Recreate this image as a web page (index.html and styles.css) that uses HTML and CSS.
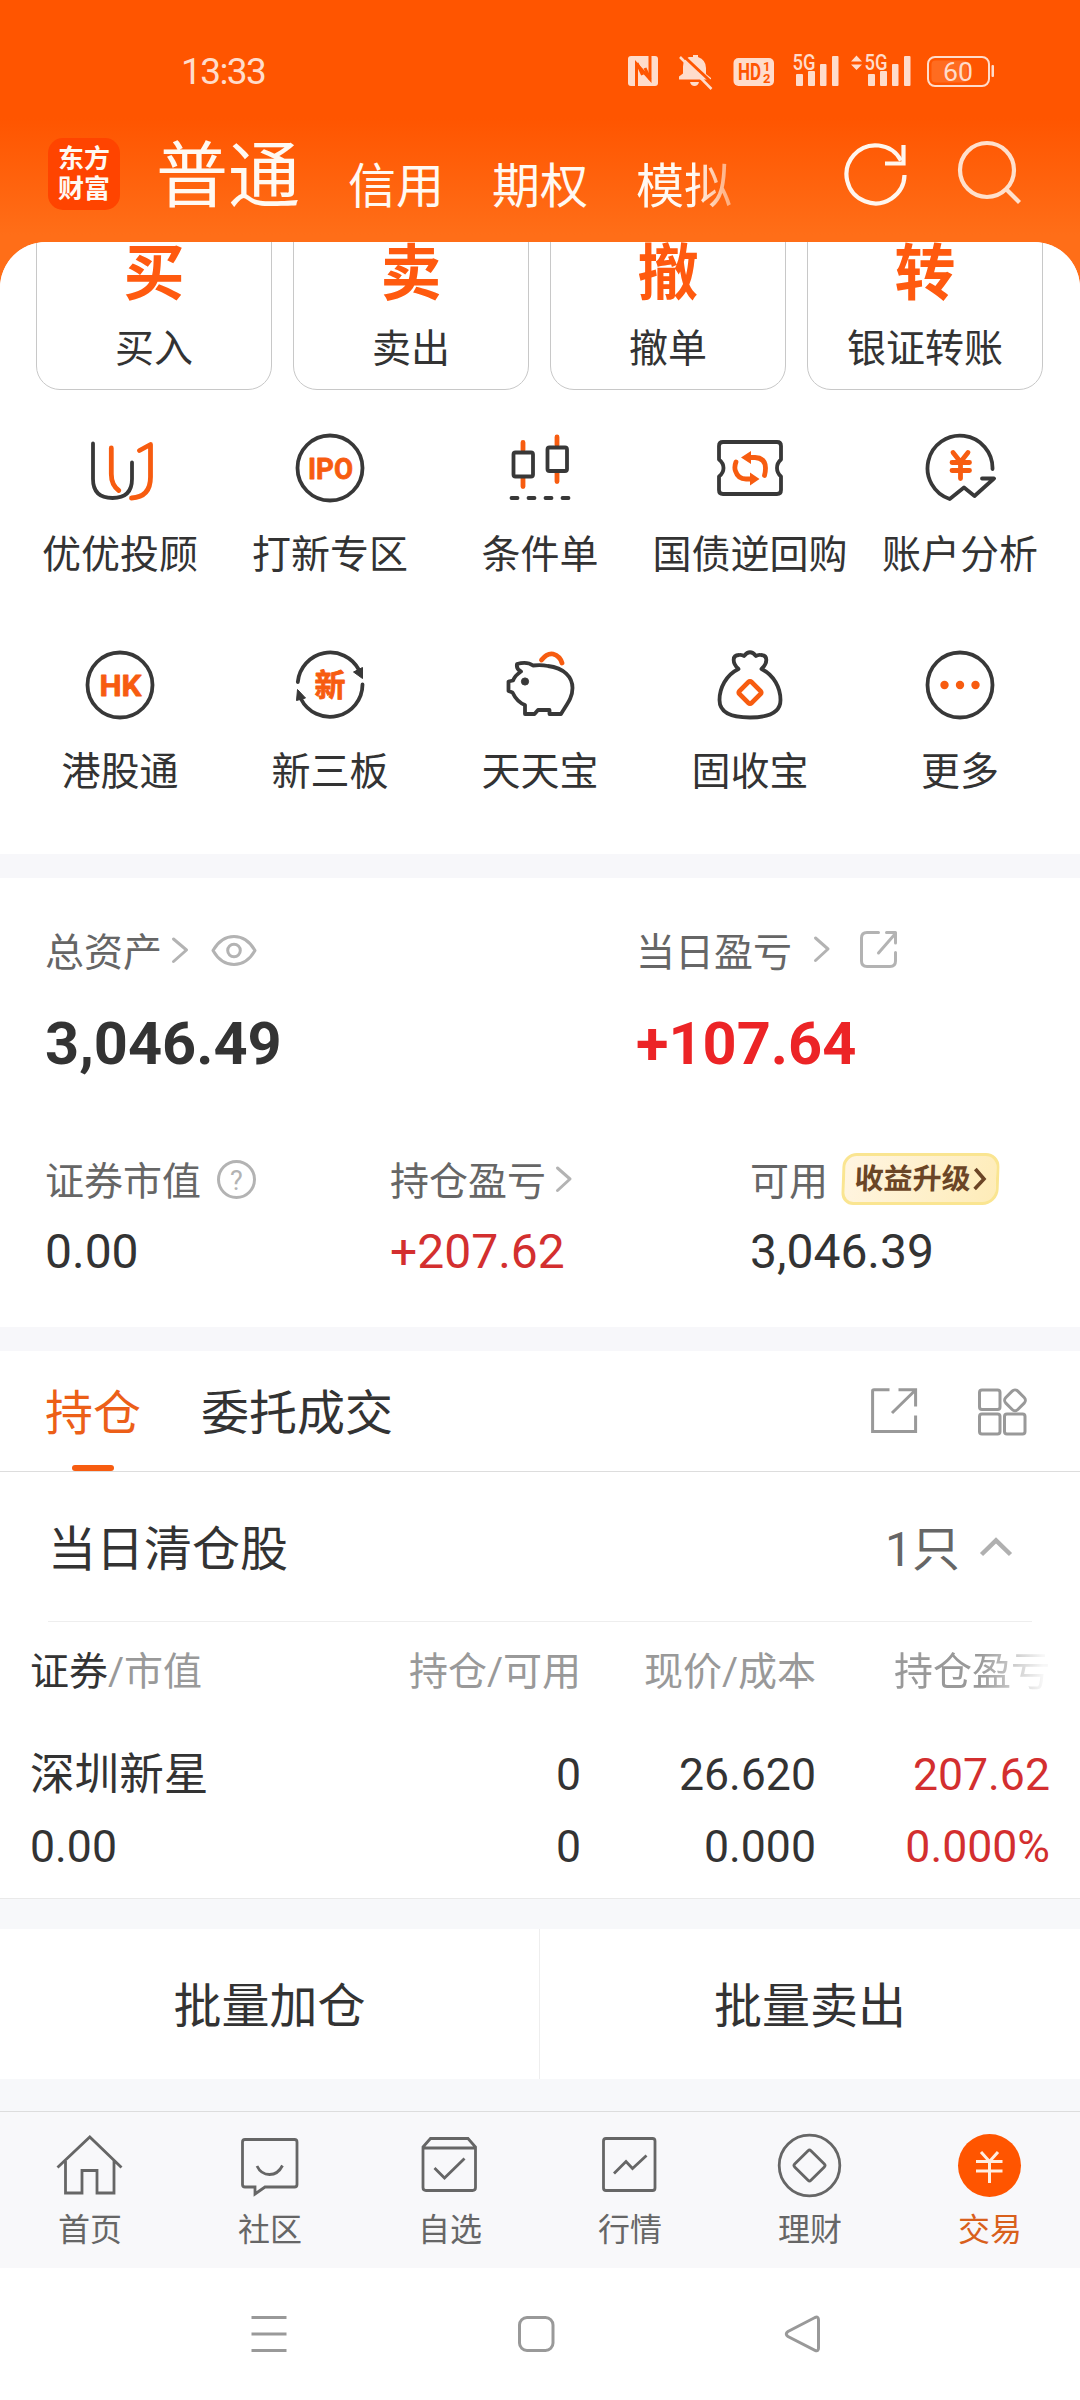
FILE: index.html
```html
<!DOCTYPE html>
<html lang="zh-CN">
<head>
<meta charset="utf-8">
<title>交易</title>
<link rel="stylesheet" href="styles.css">
</head>
<body>
<header class="top">
  <div class="status">
    <span class="clock">13:33</span>
    <svg class="status-icons" width="370" height="40" viewBox="626 51 370 40">
      <g fill="#ffdccb">
        <rect x="628" y="56" width="30" height="30" rx="3"/>
        <path d="M689 57h4v-2h5v2q8 3 8 11v6l5 4v1.500h-32v-3l4-3v-7q0-7 6-9.500zM690 82h9q-1 4-4.500 4t-4.500-4z"/>
        <rect x="733.500" y="58" width="40.500" height="28" rx="5"/>
        <rect x="796" y="74" width="7" height="12" rx="1"/><rect x="808" y="71" width="7" height="15" rx="1"/><rect x="820" y="64" width="6.500" height="22" rx="1"/><rect x="832" y="56" width="6.500" height="30" rx="1"/>
        <path d="M851 61.500l5.500-6 5.500 6zM851 64.500l5.500 5.500 5.500-5.500z"/>
        <rect x="868" y="74" width="7" height="12" rx="1"/><rect x="880" y="71" width="7" height="15" rx="1"/><rect x="892" y="64" width="6.500" height="22" rx="1"/><rect x="904" y="56" width="6.500" height="30" rx="1"/>
        <rect x="991.500" y="65" width="2.500" height="12" rx="1"/>
      </g>
      <path d="M636.500 86V64L650 79V56" fill="none" stroke="#ff5500" stroke-width="3"/>
      <path d="M637 63l5.500 12M645 68l5 11" fill="none" stroke="#ff5500" stroke-width="3"/>
      <path d="M683.500 56l32 30" stroke="#ff5500" stroke-width="3"/>
      <path d="M680 57l31.500 32" stroke="#ffdccb" stroke-width="2.500"/>
      <rect x="928" y="57" width="61" height="29" rx="7" fill="none" stroke="#ffdccb" stroke-width="2"/>
      <rect x="931.500" y="60.500" width="36" height="22" rx="4" fill="#ff6c20"/>
      <g class="status-text">
        <text x="738" y="80" font-size="23" font-weight="700" fill="#ff5500" textLength="23" lengthAdjust="spacingAndGlyphs">HD</text>
        <text x="763" y="71" font-size="13" font-weight="700" fill="#ff5500">1</text>
        <text x="763" y="83" font-size="13" font-weight="700" fill="#ff5500">2</text>
        <text x="792.500" y="70" font-size="22" font-weight="500" fill="#ffdccb" textLength="23" lengthAdjust="spacingAndGlyphs">5G</text>
        <text x="864.500" y="70" font-size="22" font-weight="500" fill="#ffdccb" textLength="23" lengthAdjust="spacingAndGlyphs">5G</text>
        <text x="943" y="81" font-size="26" fill="#ffdccb" textLength="30" lengthAdjust="spacingAndGlyphs">60</text>
      </g>
    </svg>
  </div>
  <div class="title-row">
    <div class="logo"><span>东方</span><span>财富</span></div>
    <nav class="modes">
      <span class="mode mode-on">普通</span>
      <span class="mode">信用</span>
      <span class="mode">期权</span>
      <span class="mode mode-fade">模拟</span>
    </nav>
    <svg class="refresh" width="70" height="72" viewBox="842 139 70 72" fill="none" stroke="#fff6ee" stroke-width="4.200">
      <path d="M904.500 176A29 29 0 1 1 901 161.500"/><path d="M903.500 146v18.500H885"/>
    </svg>
    <svg class="search" width="70" height="72" viewBox="955 139 70 72" fill="none" stroke="#ffe0cc" stroke-width="4.200">
      <circle cx="987" cy="171" r="27"/><path d="M1006 190l13.500 13.500"/>
    </svg>
  </div>
</header>

<main class="panel">
  <section class="actions">
    <div class="action"><b>买</b><span>买入</span></div>
    <div class="action"><b>卖</b><span>卖出</span></div>
    <div class="action"><b>撤</b><span>撤单</span></div>
    <div class="action"><b>转</b><span>银证转账</span></div>
  </section>

  <section class="shortcuts">
    <div class="shortcut">
      <svg viewBox="84 432 72 72"><path class="k" d="M93 443.500V479Q93 498 112.500 498T132 479V462.500"/><path class="o" d="M111.300 448V474Q111.300 485 118.800 490.500M131.500 498Q150.500 497 150.500 477V444.500L139.500 450.500"/></svg>
      <span>优优投顾</span>
    </div>
    <div class="shortcut">
      <svg viewBox="294 432 72 72"><circle class="k" cx="330" cy="468" r="32.500"/><text class="glyph" x="330.500" y="479" font-size="30" textLength="45" lengthAdjust="spacingAndGlyphs">IPO</text></svg>
      <span>打新专区</span>
    </div>
    <div class="shortcut">
      <svg viewBox="504 432 72 72"><path class="o" d="M523 442.500V450M523 478V486.500M557 437V445M557 473V481.500"/><rect class="k" x="513.500" y="452.500" width="19.500" height="24" rx="2"/><rect class="k" x="547.500" y="447.500" width="19.500" height="23.500" rx="2"/><path class="k" d="M511.500 498h6M528.500 498h6M545.500 498h6M562.500 498h6"/></svg>
      <span>条件单</span>
    </div>
    <div class="shortcut">
      <svg viewBox="714 432 72 72"><path class="k" d="M723 442H777Q781 442 781 446V459.500Q777 463 777 468T781 476.500V490Q781 494 777 494H723Q719 494 719 490V476.500Q723.500 473 723.500 468T719 459.500V446Q719 442 723 442Z"/><path class="o" d="M748 457.500H755Q765.500 458 765.500 468Q765.500 472 764.500 475.500M736 462Q734 467 735.500 471Q738 479 746 479H752"/><path class="of" d="M741 457.500L751 451V464ZM759.500 479L750 472.500V485.500Z"/></svg>
      <span>国债逆回购</span>
    </div>
    <div class="shortcut">
      <svg viewBox="924 432 72 72"><path class="k" d="M992.500 469A32.500 32.500 0 1 0 949.700 499L964 487.500L974.500 496L994 478.500H982"/><path class="o" d="M953 452.500L960.500 462L968 452.500M952 462.500H969.500M952 470.500H969.500M960.500 462V478.500"/></svg>
      <span>账户分析</span>
    </div>
    <div class="shortcut">
      <svg viewBox="84 649 72 72"><circle class="k" cx="120" cy="685" r="32.500"/><text class="glyph" x="120.500" y="696" font-size="30" textLength="42" lengthAdjust="spacingAndGlyphs">HK</text></svg>
      <span>港股通</span>
    </div>
    <div class="shortcut">
      <svg viewBox="294 649 72 72"><path class="k" d="M297.800 682A32.500 32.500 0 0 1 359 670M362.500 684.500A32.500 32.500 0 0 1 301 699"/><path class="kf" d="M353.500 672L362.500 667.500L362.500 678.500ZM296.500 700.500L297.500 689.500L305.500 698Z"/><text class="glyph" x="330" y="696" font-size="31">新</text></svg>
      <span>新三板</span>
    </div>
    <div class="shortcut">
      <svg viewBox="504 649 72 72"><path class="k" d="M517 664Q527 661 533 665.500Q541 664.500 548 666C564 668 572.500 677 572.500 688C572.500 698 567 704 561 714H549.500V710H538L534.500 714H525V705Q517 702 512.500 692.500L508.500 691V681.500L513 680.500Q515 675.500 521 671.500Q516 669 517 664Z"/><circle class="kf" cx="525" cy="681.500" r="3.600"/><path class="o" d="M541.500 660Q547 653 553 654Q560 656 562 663"/></svg>
      <span>天天宝</span>
    </div>
    <div class="shortcut">
      <svg viewBox="714 649 72 72"><path class="k" d="M738.500 669C732 663 732 655 739 655Q742 654.500 744 656Q750 648.500 756 656Q758 654.500 761 655C768 655 768 663 761.500 669C774 675 780.500 688 780.500 700C780.500 713 768 717.500 750 717.500C732 717.500 719.500 713 719.500 700C719.500 688 726 675 738.500 669Z"/><rect class="o" x="741.500" y="684" width="17" height="17" rx="2" transform="rotate(45 750 692.500)"/></svg>
      <span>固收宝</span>
    </div>
    <div class="shortcut">
      <svg viewBox="924 649 72 72"><circle class="k" cx="960" cy="685" r="32.500"/><g class="of"><circle cx="944.500" cy="685" r="4.200"/><circle cx="960" cy="685" r="4.200"/><circle cx="975.500" cy="685" r="4.200"/></g></svg>
      <span>更多</span>
    </div>
  </section>

  <section class="assets">
    <div class="totals">
      <div>
        <div class="label">总资产<svg class="g" width="96" height="48" viewBox="162 929 96 48"><path d="M173.500 939l13 11-13 11.500"/><path d="M213 950.500Q221 936.500 234 936.500T255 950.500Q247 964.500 234 964.500T213 950.500Z"/><circle cx="234" cy="950.500" r="6.300"/></svg></div>
        <div class="total">3,046.49</div>
      </div>
      <div>
        <div class="label">当日盈亏<svg class="g" width="110" height="48" viewBox="792 929 110 48"><path d="M815.500 938l12.500 11-12.500 11.500"/><path d="M878.500 932.500H867Q861.500 932.500 861.500 938V961Q861.500 966.500 867 966.500H890Q895.500 966.500 895.500 961V952.500M886.500 932.500H895.500V943M878.500 953L895 934"/></svg></div>
        <div class="total up-strong">+107.64</div>
      </div>
    </div>
    <div class="details">
      <div>
        <div class="label">证券市值<svg class="g" width="60" height="48" viewBox="201 1158 60 48"><circle cx="236.500" cy="1179.500" r="18"/><text x="236.500" y="1189.500" font-size="27">?</text></svg></div>
        <div class="value">0.00</div>
      </div>
      <div>
        <div class="label">持仓盈亏<svg class="g" width="30" height="48" viewBox="546 1158 30 48"><path d="M557.500 1168l12.500 11-12.500 11.500"/></svg></div>
        <div class="value up">+207.62</div>
      </div>
      <div>
        <div class="label">可用<span class="badge">收益升级<svg width="14" height="24" viewBox="0 0 14 24"><path d="M2 2l9 10-9 10" fill="none" stroke="#6b4526" stroke-width="3.600"/></svg></span></div>
        <div class="value">3,046.39</div>
      </div>
    </div>
  </section>

  <section class="tabs">
    <span class="tab tab-on">持仓</span>
    <span class="tab">委托成交</span>
    <svg class="tab-tools" width="160" height="60" viewBox="869 1381 160 60"><path d="M889.500 1389.800H874Q872.600 1389.800 872.600 1391V1431.500H915.600V1415.500M898.500 1389.800H915.600V1406.500M892 1413L915 1390.500"/><rect x="979.500" y="1390" width="20.500" height="19.500" rx="2.500"/><rect x="979.500" y="1414" width="20.500" height="20" rx="2.500"/><rect x="1004.500" y="1414" width="20.500" height="20" rx="2.500"/><rect x="1006.500" y="1391.800" width="17" height="17" rx="4" transform="rotate(45 1015 1400.300)"/></svg>
  </section>

  <section class="cleared">
    <span>当日清仓股</span>
    <span class="count">1只</span>
    <svg width="36" height="24" viewBox="978 1535 36 24"><path d="M981.500 1554.500L996 1540.500L1010.500 1554.500" fill="none" stroke="#b0b0b0" stroke-width="4.500"/></svg>
  </section>

  <section class="table">
    <div class="row head"><span><em>证券</em>/市值</span><span>持仓/可用</span><span>现价/成本</span><span class="head-fade">持仓盈亏</span></div>
    <div class="row"><span>深圳新星</span><span>0</span><span>26.620</span><span class="up">207.62</span></div>
    <div class="row"><span>0.00</span><span>0</span><span>0.000</span><span class="up">0.000%</span></div>
  </section>

  <section class="batch">
    <span>批量加仓</span>
    <span>批量卖出</span>
  </section>
</main>

<nav class="bottom">
  <div class="item"><svg viewBox="54 2130 72 70"><path d="M57.500 2167.500L89.800 2137L121.500 2167.500M65.500 2161V2193H82V2170.500H97V2193H114V2161"/></svg><span>首页</span></div>
  <div class="item"><svg viewBox="234 2130 72 70"><path d="M245 2139.500H294.500Q297 2139.500 297 2142V2184.500Q297 2187 294.500 2187H265L255 2194V2187H245Q242.500 2187 242.500 2184.500V2142Q242.500 2139.500 245 2139.500ZM257 2166Q261 2174.500 269.500 2174.500T282.500 2165.500"/></svg><span>社区</span></div>
  <div class="item"><svg viewBox="414 2130 72 70"><path d="M423 2147L430.500 2138.500H468L475.500 2147V2187.500Q475.500 2190.500 472.500 2190.500H426Q423 2190.500 423 2187.500ZM423 2148H475.500M434.500 2168L444.500 2178L464.500 2158.500"/></svg><span>自选</span></div>
  <div class="item"><svg viewBox="594 2130 72 70"><rect x="603.500" y="2138.500" width="51.500" height="52" rx="2.500"/><path d="M614 2173.500L626 2161.500L632.500 2168.500L646.500 2155.500"/></svg><span>行情</span></div>
  <div class="item"><svg viewBox="774 2130 72 70"><circle cx="809.500" cy="2165.500" r="30.300"/><rect x="798" y="2154" width="23" height="23" rx="2" transform="rotate(45 809.500 2165.500)"/></svg><span>理财</span></div>
  <div class="item item-on"><svg viewBox="954 2130 72 70"><circle class="coin" cx="989.500" cy="2165.500" r="31.500"/><path class="yen" d="M981 2152L989.500 2161.500L998 2152M976 2161.500H1002.500M976 2171H1002.500M989.500 2161.500V2183"/></svg><span>交易</span></div>
</nav>

<footer class="system">
  <svg width="36" height="40" viewBox="251 2314 36 40"><path d="M251.500 2317.500h35M251.500 2334h35M251.500 2350.500h35"/></svg>
  <svg width="38" height="40" viewBox="518 2314 38 40"><rect x="520.500" y="2317.500" width="33.500" height="33" rx="7.500"/></svg>
  <svg width="38" height="40" viewBox="784 2314 38 40"><path d="M815 2317.500Q818.500 2316 818.500 2320V2348Q818.500 2352 815 2350.300L788 2336.500Q784.500 2334 788 2331.500Z"/></svg>
</footer>
</body>
</html>
```

FILE: styles.css
```css
* { box-sizing: border-box; }

body {
  margin: 0;
  width: 1080px;
  height: 2400px;
  overflow: hidden;
  display: flex;
  flex-direction: column;
  font-family: Roboto, "Noto Sans CJK SC", sans-serif;
  color: #333;
  background: #fff linear-gradient(#ff5500 0, #ff5500 118px, #ff6e18 235px, #ff6e18 300px) no-repeat 0 0 / 100% 300px;
}

svg { display: block; flex: none; }

/* Header */
.top { flex: none; height: 242px; color: #fff9f2; }
.status { display: flex; align-items: center; height: 142px; padding-left: 181px; }
.clock { width: 445px; font-size: 37px; letter-spacing: -1.600px; color: #ffdccb; }
.status-text { font-family: Roboto, sans-serif; }
.title-row { display: flex; margin-top: -4px; padding-left: 48px; }
.logo {
  display: flex; flex-direction: column; align-items: center; justify-content: center;
  width: 72px; height: 72px; border-radius: 15px; background: #ff4400;
  font-size: 26px; font-weight: 700; line-height: 30px;
}
.modes { display: flex; align-items: flex-end; gap: 48px; width: 722px; height: 75px; padding-left: 36px; }
.mode { font-size: 48px; line-height: 52px; }
.mode-on { font-size: 72px; line-height: 72px; }
.mode-fade { -webkit-mask-image: linear-gradient(90deg, #000 60%, rgba(0,0,0,.45)); mask-image: linear-gradient(90deg, #000 60%, rgba(0,0,0,.45)); }
.search { margin-left: 43px; }

/* Scrolled content panel */
.panel { flex: none; height: 1869px; overflow: hidden; border-radius: 46px 46px 0 0; background: #f7f8fa; }
.panel > section { background: #fff; }

.actions { display: grid; grid-template-columns: repeat(4, 236px); gap: 21px; padding: 0 36px; }
.action {
  display: flex; flex-direction: column; align-items: center; justify-content: flex-end; gap: 20px;
  height: 210px; margin-top: -62px; padding-bottom: 16px;
  border: 1px solid #c8c8c8; border-radius: 24px;
}
.action b { font-size: 61px; line-height: 62px; color: #ff5a0f; }
.action span { font-size: 39px; line-height: 48px; }

.shortcuts { display: grid; grid-template-columns: repeat(5, 210px); row-gap: 70px; padding: 42px 15px 58px; }
.shortcut { display: flex; flex-direction: column; align-items: center; gap: 27px; font-size: 39px; line-height: 48px; white-space: nowrap; }
.shortcut svg { width: 72px; height: 72px; }
.k { fill: none; stroke: #383838; stroke-width: 3.800; stroke-linecap: round; stroke-linejoin: round; }
.kf { fill: #383838; stroke: #383838; stroke-width: 1; stroke-linejoin: round; }
.o { fill: none; stroke: #f75c10; stroke-width: 4.800; stroke-linecap: round; stroke-linejoin: round; }
.of { fill: #f75c10; }
.glyph { fill: #f75c10; font-weight: 700; text-anchor: middle; stroke: #f75c10; stroke-width: .8; stroke-linejoin: round; }

/* Assets */
.panel > .assets { margin-top: 24px; height: 449px; padding: 51px 0 0 45px; box-shadow: 0 -24px #f7f7fa; }
.totals { display: grid; grid-template-columns: 591px 1fr; }
.details { display: grid; grid-template-columns: 345px 360px 1fr; margin-top: 79px; }
.label { display: flex; align-items: center; height: 48px; font-size: 39px; line-height: 47px; color: #666; }
.g { fill: none; stroke: #b3b3b3; stroke-width: 3; stroke-linecap: round; stroke-linejoin: round; }
.g text { fill: #b3b3b3; stroke: none; text-anchor: middle; }
.total { margin-top: 32px; font-size: 59.500px; line-height: 70px; font-weight: 700; }
.value { margin-top: 18px; font-size: 48px; line-height: 56px; }
.up { color: #d32f2f; }
.up-strong { color: #ec2426; }
.badge {
  display: flex; align-items: center; justify-content: center; gap: 2px;
  width: 157px; height: 52px; margin: -6px 0 0 14px;
  border: 3px solid #fae591; border-radius: 14px 14px 16px 12px;
  background: linear-gradient(110deg, #fff5e2, #feecb8);
  transform: skewX(-2deg);
  font-size: 29px; line-height: 46px; font-weight: 700; color: #6b4526;
}

/* Tabs */
.panel > .tabs { display: flex; align-items: center; height: 121px; margin-top: 24px; padding-left: 45px; border-bottom: 1px solid #ddd; box-shadow: 0 -24px #f7f7fa; }
.tab { position: relative; height: 120px; margin-right: 60px; font-size: 48px; line-height: 126px; }
.tab-on { color: #ec5f18; }
.tab-on::after { content: ""; position: absolute; left: 27px; bottom: 0; width: 42px; height: 6px; border-radius: 3px; background: #f75c10; }
.tab-tools { margin-left: auto; margin-right: 51px; fill: none; stroke: #999; stroke-width: 3; }

.cleared { display: flex; align-items: center; height: 150px; padding: 0 66px 0 48px; font-size: 48px; line-height: 56px; }
.cleared span { padding-top: 6px; }
.cleared .count { margin-left: auto; margin-right: 18px; color: #666; }
.panel > .cleared { background: linear-gradient(#eee, #eee) no-repeat 48px 149px / 984px 1px, #fff; }

/* Holdings */
.table { padding: 0 30px 15px; border-bottom: 1px solid #e9e9e9; }
.row { display: grid; grid-template-columns: 320px 231px 235px 234px; text-align: right; font-size: 44.600px; line-height: 72px; }
.row span:first-child { text-align: left; }
.row.head { margin-bottom: 16px; font-size: 39px; line-height: 101px; color: #999; }
.head em { font-style: normal; color: #333; }
.head-fade { -webkit-mask-image: linear-gradient(90deg, #000 70%, rgba(0,0,0,.08) 97%); mask-image: linear-gradient(90deg, #000 70%, rgba(0,0,0,.08) 97%); }

.batch { display: flex; height: 150px; margin-top: 30px; font-size: 48px; line-height: 155px; text-align: center; }
.batch span { width: 540px; }
.batch span:first-child { border-right: 1px solid #eee; }

/* App navigation */
.bottom { flex: none; display: flex; height: 157px; border-top: 1px solid #ddd; background: #f8f8fa; }
.item { width: 180px; padding-top: 18px; display: flex; flex-direction: column; align-items: center; gap: 10px; font-size: 32px; line-height: 40px; color: #666; }
.item svg { width: 72px; height: 70px; fill: none; stroke: #666; stroke-width: 2.800; }
.item-on { color: #d9601c; }
.item .coin { fill: #ff5500; stroke: none; }
.item .yen { stroke: #ffede0; stroke-width: 3; }

/* System navigation */
.system { display: flex; align-items: center; justify-content: space-between; height: 132px; padding: 0 258px 0 251px; background: #fff; }
.system svg { fill: none; stroke: #999; stroke-width: 3; }
```
